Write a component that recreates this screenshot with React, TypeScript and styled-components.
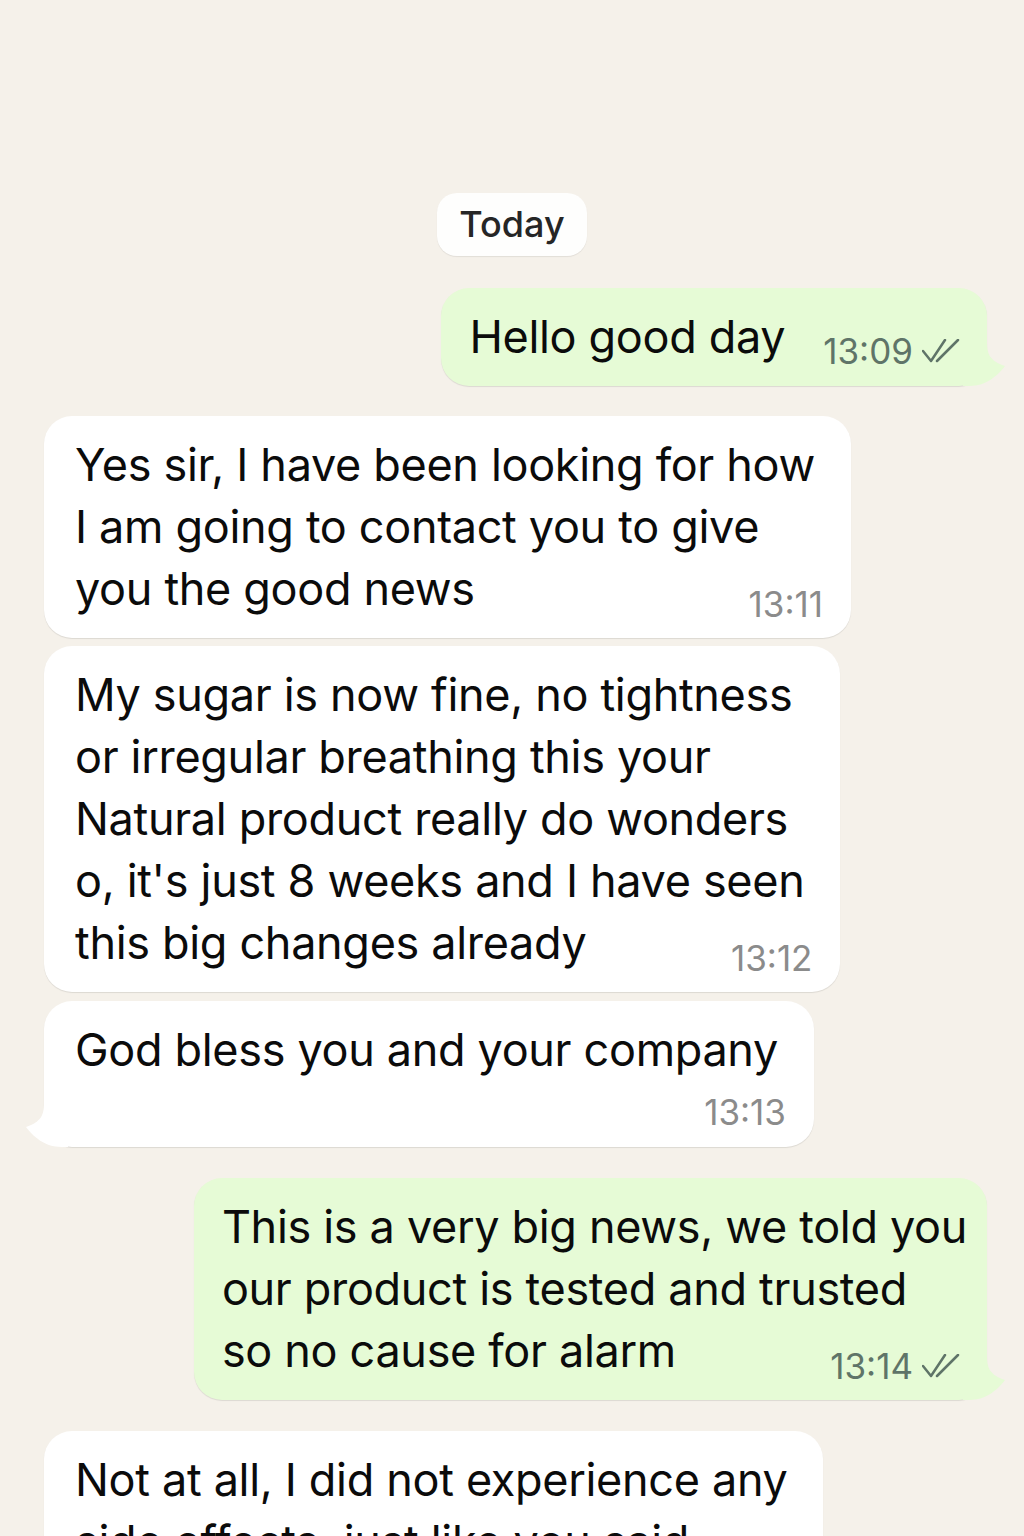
import React from 'react';
import styled, { createGlobalStyle } from 'styled-components';

type Meta = 'inline' | 'overlay' | 'below';

interface Message {
  id: number;
  out: boolean;
  lines: string[];
  time: string;
  meta: Meta;
  tail: boolean;
  gap: number;
}

const messages: Message[] = [
  { id: 1, out: true, lines: ['Hello good day'], time: '13:09', meta: 'inline', tail: true, gap: 32 },
  {
    id: 2, out: false,
    lines: ['Yes sir, I have been looking for how', 'I am going to contact you to give', 'you the good news'],
    time: '13:11', meta: 'overlay', tail: false, gap: 30,
  },
  {
    id: 3, out: false,
    lines: [
      'My sugar is now fine, no tightness',
      'or irregular breathing this your',
      'Natural product really do wonders',
      "o, it's just 8 weeks and I have seen",
      'this big changes already',
    ],
    time: '13:12', meta: 'overlay', tail: false, gap: 8,
  },
  { id: 4, out: false, lines: ['God bless you and your company'], time: '13:13', meta: 'below', tail: true, gap: 9 },
  {
    id: 5, out: true,
    lines: ['This is a very big news, we told you', 'our product is tested and trusted', 'so no cause for alarm'],
    time: '13:14', meta: 'overlay', tail: true, gap: 31,
  },
  {
    id: 6, out: false,
    lines: ['Not at all, I did not experience any', 'side effects, just like you said'],
    time: '13:15', meta: 'overlay', tail: false, gap: 31,
  },
];

const Global = createGlobalStyle`
  html, body {
    margin: 0;
    padding: 0;
    background: #f5f1ea;
  }
  body {
    font-family: Inter, "Noto Sans", "Liberation Sans", sans-serif;
    -webkit-font-smoothing: antialiased;
  }
`;

const Screen = styled.div`
  width: 1024px;
  height: 1536px;
  overflow: hidden;
  background: #f5f1ea;
  display: flex;
  flex-direction: column;
  padding: 193px 37px 0 44px;
  box-sizing: border-box;
`;

const DayRow = styled.div`
  display: flex;
  justify-content: center;
  margin-left: -7px;
`;

const DayPill = styled.div`
  background: #fefefd;
  border-radius: 20px;
  padding: 12px 22px;
  font-size: 36px;
  line-height: 39px;
  font-weight: 500;
  color: #262626;
  box-shadow: 0 1px 1px rgba(0, 0, 0, 0.08);
`;

const Row = styled.div<{ $out: boolean; $gap: number }>`
  display: flex;
  justify-content: ${(p) => (p.$out ? 'flex-end' : 'flex-start')};
  margin-top: ${(p) => p.$gap}px;
  flex-shrink: 0;
`;

const Bubble = styled.div<{ $out: boolean; $meta: Meta }>`
  position: relative;
  background: ${(p) => (p.$out ? '#e6fbd6' : '#ffffff')};
  border-radius: 28px;
  padding: ${(p) => (p.$out ? '18px 20px 18px 28px' : '18px 36px 18px 31px')};
  box-shadow: 0 1px 1px rgba(0, 0, 0, 0.1);
  display: ${(p) => (p.$meta === 'overlay' ? 'grid' : 'flex')};
  flex-direction: ${(p) => (p.$meta === 'below' ? 'column' : 'row')};
  align-items: ${(p) => (p.$meta === 'inline' ? 'flex-end' : 'stretch')};
  gap: ${(p) => (p.$meta === 'inline' ? '38px' : '0')};
`;

const Body = styled.div`
  grid-area: 1 / 1;
  font-size: 45px;
  line-height: 62px;
  color: #0b0b0b;
  letter-spacing: -0.32px;
`;

const Line = styled.div`
  white-space: nowrap;
`;

const Meta = styled.div<{ $out: boolean; $meta: Meta }>`
  grid-area: 1 / 1;
  justify-self: end;
  align-self: flex-end;
  display: flex;
  align-items: center;
  gap: 9px;
  font-size: 35px;
  line-height: 34px;
  color: ${(p) => (p.$out ? '#5f7468' : '#8b8b8b')};
  margin-top: ${(p) => (p.$meta === 'below' ? '14px' : '0')};
  margin-right: ${(p) => (p.$out ? '7px' : '-8px')};
  transform: translateY(${(p) => (p.$meta === 'overlay' ? '1px' : '0')});
`;

const Tail = styled.svg<{ $out: boolean }>`
  position: absolute;
  bottom: 0;
  ${(p) => (p.$out ? 'right: -20px;' : 'left: -20px; transform: scaleX(-1);')}
`;

const Ticks = () => (
  <svg width="38" height="24" viewBox="0 0 38 24" fill="none">
    <polyline points="1,12 9,22 23,1" stroke="#5f7468" strokeWidth="2.5" strokeLinecap="round" strokeLinejoin="round" />
    <line x1="15" y1="22" x2="36" y2="1" stroke="#5f7468" strokeWidth="2.5" strokeLinecap="round" />
  </svg>
);

const BubbleTail = ({ out }: { out: boolean }) => (
  <Tail $out={out} width="44" height="44" viewBox="0 0 44 44">
    <path
      d="M0 0 L24 0 C24 12 27 19 42 24 C35 33 24 44 6 44 L0 44 Z"
      fill={out ? '#e6fbd6' : '#ffffff'}
    />
  </Tail>
);

const App = () => {
  return (
    <>
      <Global />
      <Screen>
        <DayRow>
          <DayPill>Today</DayPill>
        </DayRow>
        {messages.map((m) => (
          <Row key={m.id} $out={m.out} $gap={m.gap}>
            <Bubble $out={m.out} $meta={m.meta}>
              <Body>
                {m.lines.map((l, i) => (
                  <Line key={i}>{l}</Line>
                ))}
              </Body>
              <Meta $out={m.out} $meta={m.meta}>
                <span>{m.time}</span>
                {m.out && <Ticks />}
              </Meta>
              {m.tail && <BubbleTail out={m.out} />}
            </Bubble>
          </Row>
        ))}
      </Screen>
    </>
  );
};

export default App;
